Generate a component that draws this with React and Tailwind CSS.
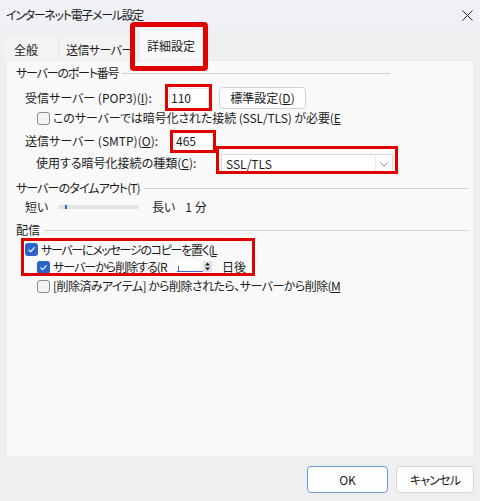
import React from "react";

const F = "[font-family:'Noto_Sans_CJK_JP','Noto_Sans',sans-serif] [font-feature-settings:'palt']";

function Check({ checked }) {
  return checked ? (
    <div className="w-[13px] h-[13px] rounded-[3px] bg-[#2c64c8] flex items-center justify-center shrink-0">
      <svg width="9" height="9" viewBox="0 0 9 9">
        <path d="M1.5 4.6 L3.6 6.6 L7.6 2.4" fill="none" stroke="white" strokeWidth="1.1" />
      </svg>
    </div>
  ) : (
    <div className="w-[13px] h-[13px] rounded-[3px] border border-[#8a8a8a] bg-[#f4f4f4] shrink-0" />
  );
}

function Header({ children, className, textClass }) {
  return (
    <div className={`flex items-center h-[18px] pl-[9px] ${className}`}>
      <span className={`whitespace-nowrap ${textClass}`}>{children}</span>
      <div className="h-px bg-[#d2d2d2] ml-[4px] flex-1" />
    </div>
  );
}

export default function App() {
  return (
    <div className={`w-[480px] h-[501px] bg-[#efefef] flex flex-col text-[12px] leading-none text-[#1b1b1b] relative overflow-hidden ${F}`}>
      {/* title bar */}
      <div className="h-[29px] bg-[#eff1f7] flex items-center justify-between pl-[6px] pr-[7px] pt-[1px]">
        <span className="tracking-[-1.3px]">インターネット電子メール設定</span>
        <svg width="11" height="11" viewBox="0 0 11 11">
          <path d="M0.5 0.5 L10.5 10.5 M10.5 0.5 L0.5 10.5" stroke="#222" strokeWidth="1" />
        </svg>
      </div>
      {/* tabs */}
      <div className="h-[31px] flex items-end pl-[5px]">
        <div className="h-[23px] w-[54px] bg-[#f3f3f3] border-r border-[#e2e2e2] flex items-center pl-[9px] pt-[2px]">全般</div>
        <div className="h-[23px] w-[76px] bg-[#f3f3f3] flex items-center pl-[7px] pt-[2px] overflow-hidden whitespace-nowrap tracking-[-0.6px]">送信サーバー</div>
        <div className="h-[30px] w-[67px] ml-[5px] bg-[#f9f9f9] flex items-center pl-[7px] pt-[1px]">詳細設定</div>
      </div>
      {/* panel */}
      <div className="mx-[6px] h-[397px] bg-[#f9f9f9] border border-[#ececec] flex flex-col pt-[3px]">
        <Header className="w-[383px]" textClass="tracking-[-1.2px]">サーバーのポート番号</Header>
        <div className="flex items-center h-[22px] mt-[5px] pl-[18px]">
          <span className="w-[144px] whitespace-nowrap">受信サーバー (POP3)(<u>I</u>):</span>
          <div className="w-[40px] h-[21px] bg-white border border-[#e6e6e6] border-b-[#8a8a8a] flex items-center pl-[1px]">110</div>
          <div className="ml-[10px] w-[87px] h-[22px] bg-[#fdfdfd] border border-[#d3d3d3] rounded-[4px] flex items-center justify-center">標準設定(<u>D</u>)</div>
        </div>
        <div className="flex items-center h-[18px] pl-[30px] gap-[3px]">
          <Check />
          <span className="whitespace-nowrap tracking-[-0.1px]">このサーバーでは暗号化された接続 (SSL/TLS) が必要(<u>E</u></span>
        </div>
        <div className="flex items-center h-[22px] mt-[3px] pl-[18px]">
          <span className="w-[149px] whitespace-nowrap">送信サーバー (SMTP)(<u>O</u>):</span>
          <div className="w-[40px] h-[21px] bg-white border border-[#e6e6e6] border-b-[#8a8a8a] flex items-center pl-[1px]">465</div>
        </div>
        <div className="flex items-center h-[22px] pl-[29px]">
          <span className="w-[185px] whitespace-nowrap">使用する暗号化接続の種類(<u>C</u>):</span>
          <div className="w-[172px] h-[20px] bg-white border border-[#dcdcdc] flex items-center pl-[4px] relative top-[1px]">
            <span className="flex-1">SSL/TLS</span>
            <div className="w-[16px] h-[16px] border-l border-[#e8e8e8] flex items-center justify-center mr-[1px]">
              <svg width="8" height="5" viewBox="0 0 8 5">
                <path d="M0.5 0.5 L4 4 L7.5 0.5" fill="none" stroke="#777" strokeWidth="0.9" />
              </svg>
            </div>
          </div>
        </div>
        <Header className="mt-[5px] pr-[4px]" textClass="tracking-[-0.9px]">サーバーのタイムアウト(T)</Header>
        <div className="flex items-center h-[20px] pl-[18px]">
          <span className="w-[33px]">短い</span>
          <div className="w-[81px] h-[4px] bg-[#e2e4e7] relative">
            <div className="absolute left-[7px] top-0 w-[2px] h-[4px] bg-[#2c64c8]" />
          </div>
          <span className="ml-[13px]">長い</span>
          <span className="ml-[10px]">1 分</span>
        </div>
        <Header className="mt-[4px] pr-[4px]">配信</Header>
        <div className="flex items-center h-[17px] mt-[2px] pl-[18px] gap-[3px]">
          <Check checked />
          <span className="whitespace-nowrap tracking-[-1.3px]">サーバーにメッセージのコピーを置く(<u>L</u></span>
        </div>
        <div className="flex items-center h-[19px] pl-[30px]">
          <Check checked />
          <span className="w-[127px] pl-[3px] whitespace-nowrap tracking-[-1px] relative top-[-1px]">サーバーから削除する(<u>R</u></span>
          <div className="flex items-start h-[13px]">
            <div className="w-[26px] h-[11px] bg-white border-b border-[#3c6fd0] relative">
              <div className="absolute left-[1px] bottom-[-1px] w-px h-[6px] bg-[#3c6fd0]" />
            </div>
            <div className="w-[9px] h-[11px] bg-[#e2e2e2] flex items-center justify-center">
              <svg width="7" height="9" viewBox="0 0 7 9">
                <path d="M3.5 0.5 L6 3.5 L1 3.5 Z M1 5.5 L6 5.5 L3.5 8.5 Z" fill="#222" />
              </svg>
            </div>
          </div>
          <span className="ml-[10px] whitespace-nowrap relative top-[-1px]">日後</span>
        </div>
        <div className="flex items-center h-[18px] pl-[30px] gap-[3px]">
          <Check />
          <span className="whitespace-nowrap tracking-[-0.55px]">[削除済みアイテム] から削除されたら、サーバーから削除(<u>M</u></span>
        </div>
      </div>
      {/* buttons */}
      <div className="flex justify-end gap-[8px] pt-[9px] pr-[6px]">
        <div className="w-[81px] h-[27px] bg-[#fdfdfd] border border-[#6a9ad8] rounded-[4px] flex items-center justify-center">OK</div>
        <div className="w-[78px] h-[27px] bg-[#fdfdfd] border border-[#d5d5d5] rounded-[4px] flex items-center justify-center tracking-[-0.8px]">キャンセル</div>
      </div>

      {/* red annotation boxes */}
      <div className="absolute left-[130px] top-[22px] w-[78px] h-[49px] border-[5px] border-[#e00000] rounded-[4px]" />
      <div className="absolute left-[165px] top-[84px] w-[47px] h-[27px] border-[3px] border-[#e00000]" />
      <div className="absolute left-[170px] top-[130px] w-[46px] h-[23px] border-[3px] border-[#e00000]" />
      <div className="absolute left-[216px] top-[146px] w-[182px] h-[28px] border-[3px] border-[#e00000]" />
      <div className="absolute left-[21px] top-[238px] w-[234px] h-[38px] border-[3px] border-[#e00000]" />
    </div>
  );
}
